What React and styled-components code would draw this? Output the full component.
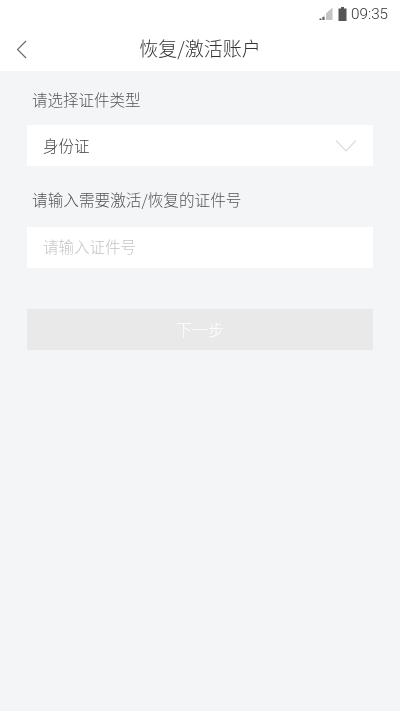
import React from "react";
import styled, { createGlobalStyle } from "styled-components";

const Global = createGlobalStyle`
  html, body { margin: 0; padding: 0; background: #f4f5f7; }
  * { box-sizing: border-box; }
`;

const Page = styled.div`
  width: 400px;
  height: 711px;
  overflow: hidden;
  background: #f4f5f7;
  font-family: "Noto Sans CJK SC", "Noto Sans", sans-serif;
  font-weight: 300;
  display: flex;
  flex-direction: column;
  will-change: transform;
`;

const Header = styled.header`
  height: 71px;
  background: #fff;
  display: flex;
  flex-direction: column;
  flex: none;
`;

const StatusBar = styled.div`
  height: 27px;
  display: flex;
  align-items: center;
  justify-content: flex-end;
  gap: 5px;
  padding-right: 12px;
  color: #555;
`;

const Time = styled.span`
  font-family: Roboto, sans-serif;
  font-size: 15.2px;
  font-weight: 300;
  color: #333;
  margin-left: -1px;
`;

const NavBar = styled.div`
  position: relative;
  height: 44px;
  display: flex;
  align-items: center;
  justify-content: center;
`;

const BackIcon = styled.svg`
  position: absolute;
  left: 15px;
  top: 12px;
`;

const Title = styled.h1`
  margin: 0 0 3px;
  font-size: 19px;
  font-weight: 300;
  color: #333;
`;

const Content = styled.main`
  padding: 0 27px;
  display: flex;
  flex-direction: column;
`;

const Label = styled.div`
  height: ${(p) => p.$height}px;
  padding: ${(p) => p.$pad}px 5px 0 6px;
  margin-left: -1px;
  display: flex;
  align-items: center;
  font-size: ${(p) => p.$size || 15.5}px;
  line-height: 20px;
  color: #555;
`;

const Field = styled.div`
  height: 41px;
  background: #fff;
  padding: 0 16px ${(p) => (p.$placeholder ? 3 : 1)}px;
  display: flex;
  align-items: center;
  justify-content: space-between;
  font-size: 15.5px;
  color: ${(p) => (p.$placeholder ? "#c4c4c4" : "#444")};
`;

const Arrow = styled.svg`
  margin-top: 1px;
`;

const Button = styled.button`
  height: 41px;
  margin-top: 41px;
  border: 0;
  background: #e9e9e9;
  color: #fff;
  font: inherit;
  font-size: 16px;
  padding: 0 0 2px;
`;

export default function App() {
  return (
    <Page>
      <Global />
      <Header>
        <StatusBar>
          <svg width="14" height="14" viewBox="0 0 14 14">
            <path d="M13.5 0.5v12.5H7V6.5z" fill="#c4c4c4" />
            <path d="M5.5 8V13H3V10.5z" fill="#c4c4c4" />
            <path d="M.5 11.5H2.5V13H.5z" fill="#555" />
            <path d="M3.5 10h2v3h-2z" fill="#666" />
          </svg>
          <svg width="9" height="14" viewBox="0 0 9 14">
            <path d="M3 0h3v1.5h2.5V14H.5V1.5H3z" fill="#555" />
          </svg>
          <Time>09:35</Time>
        </StatusBar>
        <NavBar>
          <BackIcon width="13" height="20" viewBox="0 0 13 20" fill="none">
            <path d="M11 2 2.5 10.5l8.5 8.5" stroke="#666" strokeWidth="1.1" />
          </BackIcon>
          <Title>恢复/激活账户</Title>
        </NavBar>
      </Header>
      <Content>
        <Label $height={54} $pad={2}>请选择证件类型</Label>
        <Field>
          身份证
          <Arrow width="22" height="14" viewBox="0 0 22 14" fill="none">
            <path d="M1 1.5 11 12 21 1.5" stroke="#dcdcdc" strokeWidth="1.2" />
          </Arrow>
        </Field>
        <Label $height={61} $pad={7} $size={15.65}>请输入需要激活/恢复的证件号</Label>
        <Field $placeholder>请输入证件号</Field>
        <Button>下一步</Button>
      </Content>
    </Page>
  );
}
